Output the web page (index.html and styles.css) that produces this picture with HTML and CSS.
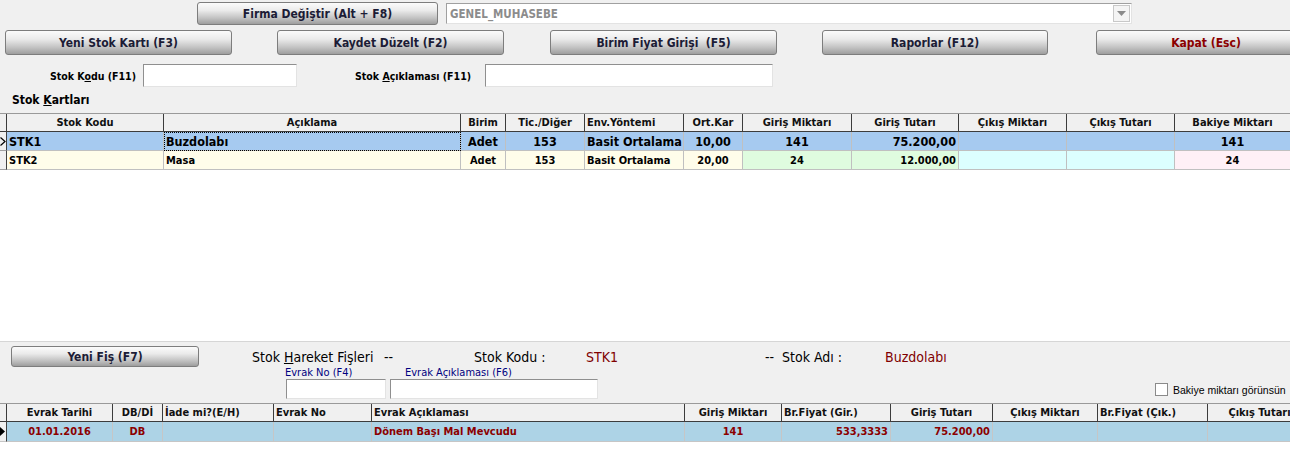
FILE: index.html
```html
<!DOCTYPE html>
<html lang="tr">
<head>
<meta charset="utf-8">
<title>Stok Kartları</title>
<link rel="stylesheet" href="styles.css">
</head>
<body>
<div class="app">
  <div class="toprow">
    <button class="btn btn-firma">Firma Değiştir (Alt + F8)</button>
    <div class="combo">
      <span class="combo-text">GENEL_MUHASEBE</span>
      <span class="combo-arrow"><svg width="9" height="5" viewBox="0 0 9 5"><path d="M0 0H9L4.5 5Z" fill="#8a8a8a"/></svg></span>
    </div>
  </div>

  <div class="btnrow">
    <button class="btn b1">Yeni Stok Kartı (F3)</button>
    <button class="btn b2">Kaydet Düzelt (F2)</button>
    <button class="btn b3">Birim Fiyat Girişi&nbsp; (F5)</button>
    <button class="btn b4">Raporlar (F12)</button>
    <button class="btn b5 btn-red">Kapat (Esc)</button>
  </div>

  <div class="searchrow">
    <label class="lbl lbl-kod">Stok K<u>o</u>du (F11)</label>
    <input class="inp inp-kod" type="text">
    <label class="lbl lbl-aciklama">Stok <u>A</u>çıklaması (F11)</label>
    <input class="inp inp-aciklama" type="text">
  </div>

  <div class="section-title">Stok <u>K</u>artları</div>

  <div class="grid grid1">
    <div class="row head">
      <div class="c ind"></div>
      <div class="c">Stok Kodu</div>
      <div class="c">Açıklama</div>
      <div class="c">Birim</div>
      <div class="c">Tic./Diğer</div>
      <div class="c l">Env.Yöntemi</div>
      <div class="c">Ort.Kar</div>
      <div class="c">Giriş Miktarı</div>
      <div class="c">Giriş Tutarı</div>
      <div class="c">Çıkış Miktarı</div>
      <div class="c">Çıkış Tutarı</div>
      <div class="c">Bakiye Miktarı</div>
    </div>
    <div class="row sel">
      <div class="c ind"><svg width="6" height="9" viewBox="0 0 6 9"><path d="M0.5 0.5L5 4.5L0.5 8.5" fill="none" stroke="#000" stroke-width="1.2"/></svg></div>
      <div class="c l">STK1</div>
      <div class="c l focus">Buzdolabı</div>
      <div class="c">Adet</div>
      <div class="c">153</div>
      <div class="c l">Basit Ortalama</div>
      <div class="c">10,00</div>
      <div class="c">141</div>
      <div class="c r">75.200,00</div>
      <div class="c"></div>
      <div class="c"></div>
      <div class="c">141</div>
    </div>
    <div class="row norm">
      <div class="c ind"></div>
      <div class="c l">STK2</div>
      <div class="c l">Masa</div>
      <div class="c">Adet</div>
      <div class="c">153</div>
      <div class="c l">Basit Ortalama</div>
      <div class="c">20,00</div>
      <div class="c green">24</div>
      <div class="c r green">12.000,00</div>
      <div class="c cyan"></div>
      <div class="c cyan"></div>
      <div class="c pink">24</div>
    </div>
  </div>

  <div class="lower">
    <div class="lower-top">
      <button class="btn btn-fis">Yeni Fiş (F7)</button>
      <span class="info">Stok <u>H</u>areket Fişleri</span>
      <span class="info">--</span>
      <span class="info">Stok Kodu :</span>
      <span class="info red">STK1</span>
      <span class="info">--</span>
      <span class="info">Stok Adı :</span>
      <span class="info red">Buzdolabı</span>
    </div>
    <div class="lower-bottom">
      <div class="field f-no">
        <span class="flabel">Evrak No (F4)</span>
        <input class="inp inp-no" type="text">
      </div>
      <div class="field f-ack">
        <span class="flabel">Evrak Açıklaması (F6)</span>
        <input class="inp inp-ack" type="text">
      </div>
      <label class="check"><span class="box"></span>Bakiye miktarı görünsün</label>
    </div>
  </div>

  <div class="grid grid2">
    <div class="row head">
      <div class="c ind"></div>
      <div class="c">Evrak Tarihi</div>
      <div class="c">DB/Dİ</div>
      <div class="c l">İade mi?(E/H)</div>
      <div class="c l">Evrak No</div>
      <div class="c l">Evrak Açıklaması</div>
      <div class="c">Giriş Miktarı</div>
      <div class="c l">Br.Fiyat (Gir.)</div>
      <div class="c">Giriş Tutarı</div>
      <div class="c">Çıkış Miktarı</div>
      <div class="c l">Br.Fiyat (Çık.)</div>
      <div class="c">Çıkış Tutarı</div>
    </div>
    <div class="row fis">
      <div class="c ind"><svg width="6" height="9" viewBox="0 0 6 9"><path d="M0 0L5 4.5L0 9Z" fill="#000"/></svg></div>
      <div class="c">01.01.2016</div>
      <div class="c">DB</div>
      <div class="c"></div>
      <div class="c"></div>
      <div class="c l">Dönem Başı Mal Mevcudu</div>
      <div class="c">141</div>
      <div class="c r">533,3333</div>
      <div class="c r">75.200,00</div>
      <div class="c"></div>
      <div class="c"></div>
      <div class="c"></div>
    </div>
  </div>
</div>
</body>
</html>
```

FILE: styles.css
```css
* { box-sizing: border-box; }
html, body { margin: 0; padding: 0; }
body {
  background: #f0f0f0;
  width: 1290px;
  height: 449px;
  overflow: hidden;
  font-family: "DejaVu Sans Condensed", "DejaVu Sans", sans-serif;
  font-size: 11px;
  color: #000;
}
.app { width: 1290px; height: 449px; overflow: hidden; display: flex; flex-direction: column; }
.app > * { flex-shrink: 0; }

/* buttons */
.btn {
  flex-shrink: 0;
  font-family: "DejaVu Sans Condensed", "DejaVu Sans", sans-serif;
  font-weight: bold;
  font-size: 12px;
  color: #1c1c36;
  border: 1px solid #7d7d7d;
  border-radius: 3px;
  background: linear-gradient(#fbfbfb 0%, #ebebeb 35%, #c4c4c4 70%, #9e9e9e 100%);
  padding: 0;
  height: 24px;
  cursor: default;
}
.btn-red { color: #8b0000; }

.toprow { display: flex; align-items: flex-start; padding-left: 197px; margin-top: 2px; height: 24px; }
.btn-firma { width: 241px; height: 23px; }
.combo {
  flex-shrink: 0;
  margin-left: 8px;
  margin-top: 1px;
  width: 686px;
  height: 21px;
  background: #fff;
  border: 1px solid #a0a0a0;
  border-right-color: #e3e3e3;
  border-bottom-color: #e3e3e3;
  display: flex;
  align-items: center;
  justify-content: space-between;
  padding-left: 3px;
  padding-right: 1px;
}
.combo-text { color: #8c8c8c; font-weight: bold; font-size: 11.5px; }
.combo-arrow {
  width: 17px; height: 17px;
  border: 1px solid #c8c8c8;
  background: #f4f4f4;
  display: flex; align-items: center; justify-content: center;
}

.btnrow { display: flex; margin-top: 4px; height: 25px; padding-left: 5px; }
.btnrow .btn { width: 227px; height: 25px; }
.b2 { margin-left: 45px; }
.b3 { margin-left: 46px; }
.b4 { margin-left: 45px; width: 226px !important; }
.b5 { margin-left: 48px; width: 220px !important; }

.searchrow { display: flex; align-items: center; margin-top: 9px; height: 23px; }
.searchrow > * { flex-shrink: 0; }
.lbl { font-weight: bold; font-size: 10.5px; color: #000; }
.lbl-kod { width: 136px; text-align: right; }
.inp {
  flex-shrink: 0;
  background: #fff;
  border: 1px solid #8f8f8f;
  border-right-color: #e3e3e3;
  border-bottom-color: #e3e3e3;
  height: 23px;
  padding: 0;
  margin: 0;
  outline: none;
}
.inp-kod { margin-left: 7px; width: 154px; }
.lbl-aciklama { margin-left: 58px; width: 122px; }
.inp-aciklama { margin-left: 8px; width: 288px; }

.section-title { margin-top: 6px; padding-left: 12px; font-size: 12px; font-weight: bold; height: 20px; line-height: 14px; }

/* grids */
.grid { background: #fff; overflow: hidden; }
.grid1 { height: 228px; border-top: 1px solid #9a9a9a; }
.grid2 { flex: 1 1 auto; border-top: 1px solid #9a9a9a; }
.row { display: grid; width: 1330px; }
.grid1 .row { grid-template-columns: 7px 157px 297px 45px 79px 99px 59px 109px 107px 108px 108px 116px; }
.grid2 .row { grid-template-columns: 7px 106px 50px 111px 98px 313px 97px 109px 102px 105px 110px 104px; }
.c {
  border-right: 1px solid #c0c0c0;
  border-bottom: 1px solid #c0c0c0;
  display: flex;
  align-items: center;
  justify-content: center;
  white-space: nowrap;
  overflow: hidden;
  font-weight: bold;
  padding: 0 2px;
}
.c.l { justify-content: flex-start; }
.c.r { justify-content: flex-end; }
.c.ind { padding: 0; justify-content: flex-start; border-right: 1px solid #404040; background: #f0f0f0; border-bottom-color: #a0a0a0; }
.head { height: 18px; }
.head .c { background: #f0f0f0; border-right: 1px solid #3c3c3c; border-bottom: 1px solid #3c3c3c; color: #111; font-size: 11px; }
.grid1 .sel { height: 19px; background: #a6caf0; font-size: 12.5px; }
.grid1 .norm { height: 19px; background: #fffdea; font-size: 11px; }
.focus { outline: 1px dotted #000; outline-offset: -1px; }
.green { background: #dffcdf; }
.cyan { background: #dcffff; }
.pink { background: #fff0f6; }

.lower { height: 62px; border-top: 1px solid #d6d6d6; display: flex; flex-direction: column; }
.lower-top {
  display: grid;
  grid-template-columns: 241px 132px 90px 112px 179px 17px 103px auto;
  padding-left: 11px;
  margin-top: 4px;
  height: 21px;
  align-items: center;
}
.btn-fis { width: 188px; height: 21px; font-size: 12px; }
.info { font-size: 14px; color: #000; white-space: nowrap; }
.info.red { color: #800000; }
.lower-bottom { display: flex; align-items: flex-end; padding-left: 285px; height: 32px; }
.lower-bottom > * { flex-shrink: 0; }
.field { display: flex; flex-direction: column; }
.flabel { color: #000080; font-size: 11px; height: 12px; line-height: 12px; white-space: nowrap; }
.f-ack { margin-left: 4px; }
.f-ack .flabel { padding-left: 15px; }
.inp-no { width: 100px; height: 20px; margin-left: 1px; }
.inp-ack { width: 208px; height: 20px; }
.check { margin-left: 557px; margin-bottom: 3px; display: flex; align-items: center; white-space: nowrap; font-family: "Liberation Sans", Arial, sans-serif; font-size: 10.5px; color: #000; }
.box { width: 13px; height: 13px; border: 1px solid #8a8a8a; background: #fff; margin-right: 5px; flex-shrink: 0; }

.grid2 .fis { height: 20px; background: #add3e6; color: #8b0000; font-size: 11px; }
.grid2 .fis .c { border-right-color: #c6c6c6; border-bottom-color: #c6c6c6; }
.grid2 .fis .c.ind { background: #f0f0f0; border-right-color: #404040; }
```
